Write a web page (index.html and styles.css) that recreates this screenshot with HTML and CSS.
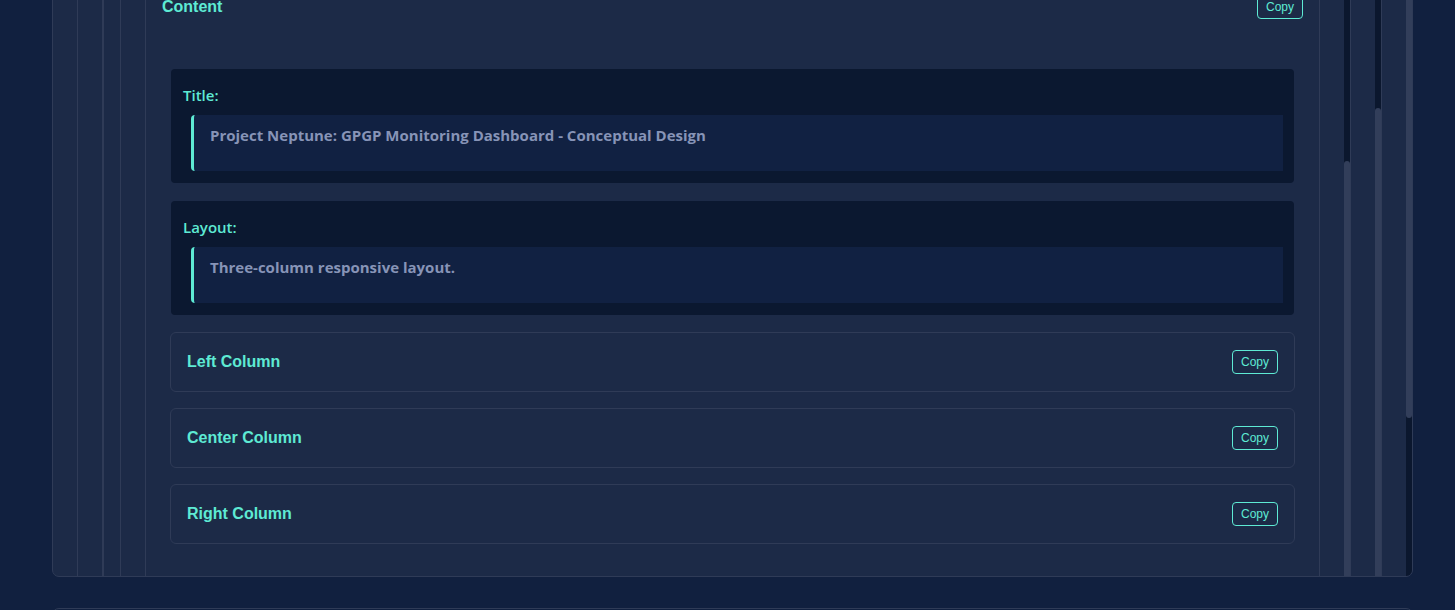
FILE: index.html
```html
<!DOCTYPE html>
<html lang="en">
<head>
<meta charset="utf-8">
<title>Project Neptune – Content</title>
<link rel="stylesheet" href="styles.css">
</head>
<body>
<div class="frame frame-l1">
  <div class="frame-main">
    <div class="frame frame-l2">
      <div class="frame-main">
        <div class="frame frame-l3">
          <div class="l3-main">
            <div class="l3-inner">
              <section class="section">
                <header class="section-head">
                  <h3 class="section-title">Content</h3>
                  <button class="copy">Copy</button>
                </header>
                <div class="section-body">
                  <div class="field">
                    <div class="field-label">Title:</div>
                    <blockquote class="field-value"><p>Project Neptune: GPGP Monitoring Dashboard - Conceptual Design</p></blockquote>
                  </div>
                  <div class="field">
                    <div class="field-label">Layout:</div>
                    <blockquote class="field-value"><p>Three-column responsive layout.</p></blockquote>
                  </div>
                  <div class="sub">
                    <h4 class="sub-title">Left Column</h4>
                    <button class="copy">Copy</button>
                  </div>
                  <div class="sub">
                    <h4 class="sub-title">Center Column</h4>
                    <button class="copy">Copy</button>
                  </div>
                  <div class="sub">
                    <h4 class="sub-title">Right Column</h4>
                    <button class="copy">Copy</button>
                  </div>
                </div>
              </section>
            </div>
          </div>
          <div class="sb sb-l3"><div class="thumb"></div></div>
        </div>
      </div>
      <div class="sb sb-l2"><div class="thumb"></div></div>
    </div>
  </div>
  <div class="sb sb-l1"><div class="thumb"></div></div>
</div>
<div class="next-panel"></div>
</body>
</html>
```

FILE: styles.css
```css
:root {
  --page: #11203f;
  --panel: #1c2a47;
  --line: #2f3b57;
  --dark: #0b1830;
  --quote: #112142;
  --muted: #8794b7;
  --teal: #5eead4;
  --track: #0b172e;
  --thumb: #323e5a;
}

* { box-sizing: border-box; }

html, body {
  margin: 0;
  padding: 0;
  background: var(--page);
  overflow: hidden;
}

body {
  font-family: "Liberation Sans", Arial, sans-serif;
  color: var(--teal);
}

.frame {
  display: flex;
  background: var(--panel);
  border: 1px solid var(--line);
}

.frame-main {
  flex: 1;
  min-width: 0;
  padding: 24px 24px 0 24px;
}

.frame-l1 {
  width: 1361px;
  height: 691px;
  margin: -114px 0 0 52px;
  overflow: hidden;
  border-radius: 0 0 7px 7px;
}

.frame-l3 {
  border-left-width: 2px;
}

.l3-main {
  flex: 1;
  min-width: 0;
  padding: 16px 0 0 16px;
}

.l3-inner {
  border-left: 1px solid var(--line);
  border-top: 1px solid var(--line);
  padding: 24px 24px 0 24px;
}

/* scrollbars */
.sb {
  width: 6px;
  flex: none;
  background: var(--track);
  display: flex;
  flex-direction: column;
}

.thumb {
  background: var(--thumb);
  border-radius: 3px;
}

.sb-l1 .thumb { height: 531px; }
.sb-l2 .thumb { margin-top: 196px; flex: 1; }
.sb-l3 .thumb { margin-top: 224px; flex: 1; }

/* section */
.section {
  border: 1px solid var(--line);
  border-radius: 8px;
  background: var(--panel);
  min-height: 760px;
}

.section-head {
  display: flex;
  align-items: center;
  justify-content: space-between;
  padding: 16px;
}

.section-title {
  margin: 0;
  font-size: 16px;
  line-height: 24px;
  font-weight: 700;
  color: var(--teal);
}

.section-body {
  display: flex;
  flex-direction: column;
  gap: 16px;
  padding: 33px 24px 24px;
}

.copy {
  font-family: "Liberation Sans", Arial, sans-serif;
  font-size: 12px;
  line-height: 14px;
  height: 24px;
  padding: 4px 8px;
  width: 46px;
  color: var(--teal);
  background: transparent;
  border: 1px solid var(--teal);
  border-radius: 4px;
}

/* fields */
.field {
  background: var(--dark);
  background-clip: padding-box;
  border: 1px solid transparent;
  border-radius: 5px;
  padding: 11px 11px 12px;
}

.field-label {
  font-family: "Open Sans", "Noto Sans", sans-serif;
  font-weight: 600;
  font-size: 15px;
  line-height: 22px;
  color: var(--teal);
  margin: 4px 0 9px;
  padding-left: 1px;
}

.field-value {
  margin: 0 0 0 9px;
  background: var(--quote);
  border-left: 3px solid var(--teal);
  border-radius: 4px 0 0 4px;
  padding: 8px 16px 24px;
}

.field-value p {
  margin: 0;
  font-family: "Open Sans", "Noto Sans", sans-serif;
  font-weight: 700;
  font-size: 15px;
  line-height: 24px;
  color: var(--muted);
}

/* sub cards */
.sub {
  height: 60px;
  display: flex;
  align-items: center;
  justify-content: space-between;
  padding: 0 16px;
  border: 1px solid var(--line);
  border-radius: 6px;
  background: var(--panel);
}

.sub-title {
  margin: 0;
  font-size: 16px;
  font-weight: 700;
  line-height: 20px;
  color: var(--teal);
}

.next-panel {
  width: 1361px;
  height: 40px;
  margin: 31px 0 0 52px;
  border: 1px solid var(--line);
  border-radius: 7px 7px 0 0;
  background: var(--page);
}
```
